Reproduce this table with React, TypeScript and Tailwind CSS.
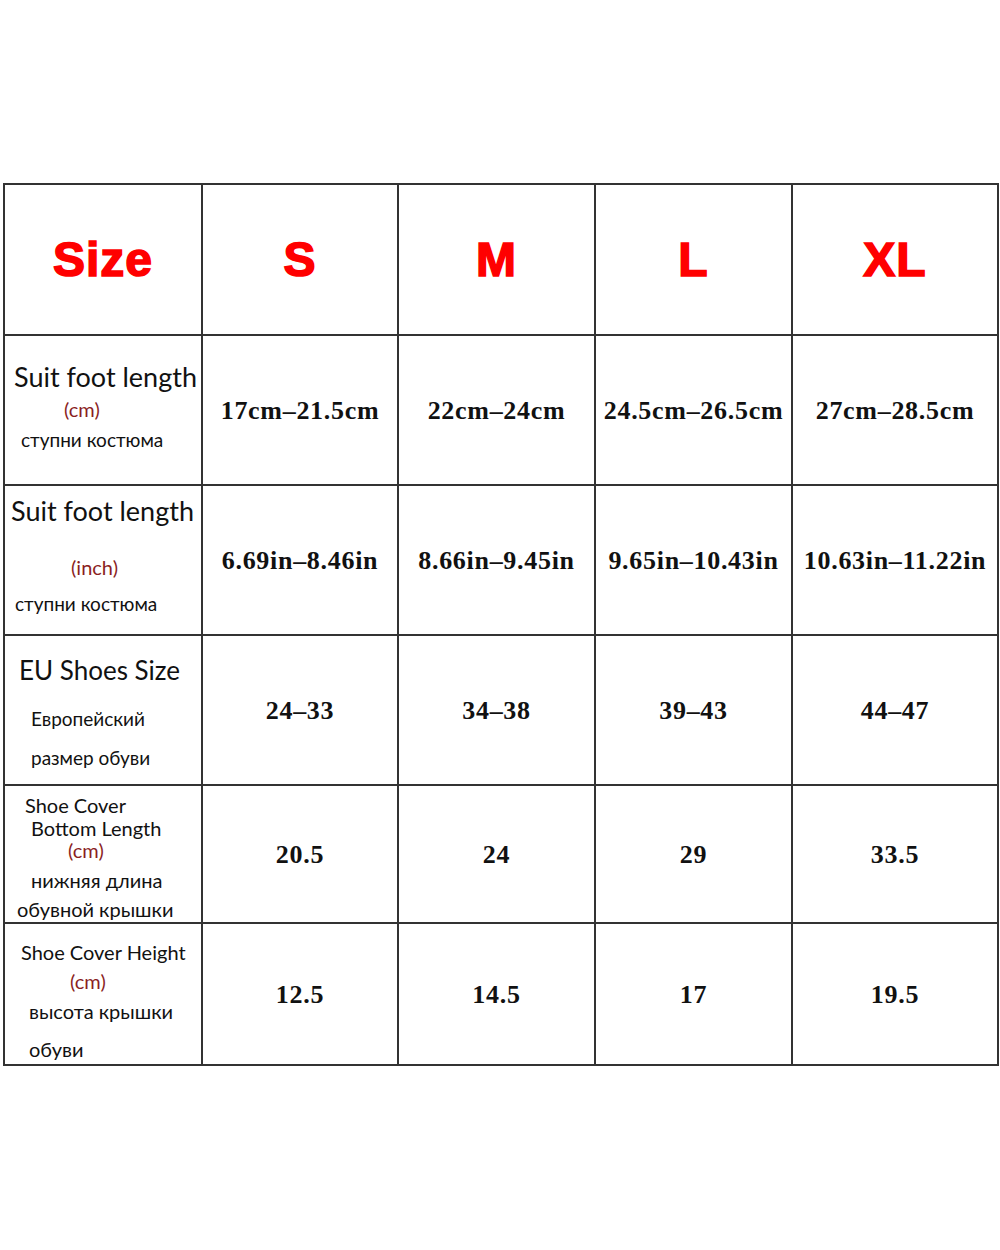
import React from 'react'

const sizes = ['S', 'M', 'L', 'XL']

const rows = [
  { h: 'h-[150px]', values: ['17cm–21.5cm', '22cm–24cm', '24.5cm–26.5cm', '27cm–28.5cm'] },
  { h: 'h-[150px]', values: ['6.69in–8.46in', '8.66in–9.45in', '9.65in–10.43in', '10.63in–11.22in'] },
  { h: 'h-[150px]', values: ['24–33', '34–38', '39–43', '44–47'] },
  { h: 'h-[138px]', values: ['20.5', '24', '29', '33.5'] },
  { h: 'h-[142px]', values: ['12.5', '14.5', '17', '19.5'] },
]

const labelFont = "font-['Lato','Noto_Sans',sans-serif] text-[#111]"
const unit = 'text-[#8b1f1f]'
const head =
  "flex h-[151px] items-center justify-center border-r-2 border-b-2 border-[#333] font-['Liberation_Sans',Arial,sans-serif] text-[48px] font-bold text-[#f00] [-webkit-text-stroke:1.6px_#f00] tracking-[1px]"

function Label({ index }: { index: number }) {
  if (index === 0) {
    return (
      <div className={`flex flex-col ${labelFont}`}>
        <div className="mt-[26px] h-[30px] pl-[9px] text-[27px] leading-[30px]">Suit foot length</div>
        <div className={`mt-[2px] h-[30px] pl-[59px] text-[20px] leading-[30px] ${unit}`}>(cm)</div>
        <div className="mt-[1px] h-[30px] pl-[16px] text-[19px] leading-[30px]">ступни костюма</div>
      </div>
    )
  }
  if (index === 1) {
    return (
      <div className={`flex flex-col ${labelFont}`}>
        <div className="mt-[10px] h-[30px] pl-[6px] text-[27px] leading-[30px]">Suit foot length</div>
        <div className={`mt-[26px] h-[30px] pl-[66px] text-[20px] leading-[30px] ${unit}`}>(inch)</div>
        <div className="mt-[7px] h-[30px] pl-[10px] text-[19px] leading-[30px]">ступни костюма</div>
      </div>
    )
  }
  if (index === 2) {
    return (
      <div className={`flex flex-col ${labelFont}`}>
        <div className="mt-[19px] h-[30px] pl-[14px] text-[26px] leading-[30px]">EU Shoes Size</div>
        <div className="mt-[19px] h-[30px] pl-[26px] text-[19px] leading-[30px]">Европейский</div>
        <div className="mt-[9px] h-[30px] pl-[26px] text-[19px] leading-[30px]">размер обуви</div>
      </div>
    )
  }
  if (index === 3) {
    return (
      <div className={`flex flex-col ${labelFont}`}>
        <div className="mt-[8px] h-[22px] pl-[20px] text-[20px] leading-[22px]">Shoe Cover</div>
        <div className="mt-[1px] h-[22px] pl-[26px] text-[20px] leading-[22px]">Bottom Length</div>
        <div className={`h-[22px] pl-[63px] text-[20px] leading-[22px] ${unit}`}>(cm)</div>
        <div className="mt-[8px] h-[22px] pl-[26px] text-[20px] leading-[22px]">нижняя длина</div>
        <div className="mt-[7px] h-[22px] pl-[12px] text-[20px] leading-[22px]">обувной крышки</div>
      </div>
    )
  }
  return (
    <div className={`flex flex-col ${labelFont}`}>
      <div className="mt-[14px] h-[28px] pl-[16px] text-[20px] leading-[28px]">Shoe Cover Height</div>
      <div className={`mt-[1px] h-[28px] pl-[65px] text-[20px] leading-[28px] ${unit}`}>(cm)</div>
      <div className="mt-[2px] h-[28px] pl-[24px] text-[20px] leading-[28px]">высота крышки</div>
      <div className="mt-[10px] h-[28px] pl-[24px] text-[20px] leading-[28px]">обуви</div>
    </div>
  )
}

export default function App() {
  return (
    <div className="h-[1250px] w-[1000px] bg-white pt-[183px] pl-[3px]">
      <div className="grid w-fit grid-cols-[198px_196px_197px_197px_206px] border-t-2 border-l-2 border-[#333]">
        <div className={head}>Size</div>
        {sizes.map((s) => (
          <div key={s} className={head}>
            {s}
          </div>
        ))}
        {rows.map((row, i) => (
          <React.Fragment key={i}>
            <div className={`${row.h} overflow-hidden border-r-2 border-b-2 border-[#333]`}>
              <Label index={i} />
            </div>
            {row.values.map((v) => (
              <div
                key={v}
                className={`${row.h} flex items-center justify-center whitespace-nowrap border-r-2 border-b-2 border-[#333] font-['Liberation_Serif','Times_New_Roman',serif] text-[26px] font-bold tracking-[0.7px] text-[#111]`}
              >
                {v}
              </div>
            ))}
          </React.Fragment>
        ))}
      </div>
    </div>
  )
}
